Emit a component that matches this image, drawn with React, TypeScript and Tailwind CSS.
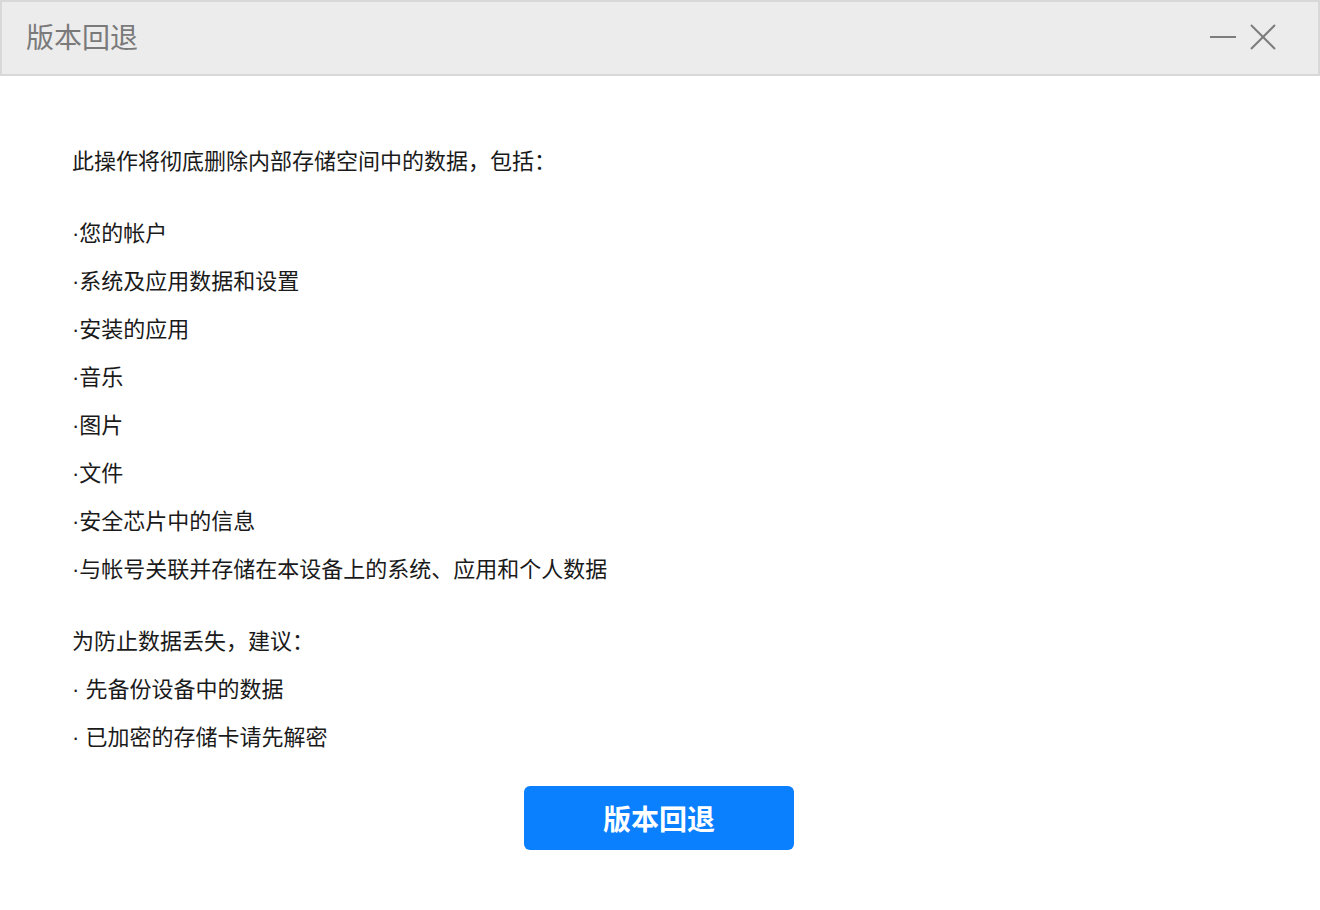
export default function App() {
  const font = { fontFamily: '"Noto Sans CJK SC", "Noto Sans", sans-serif' };
  const items = [
    "您的帐户",
    "系统及应用数据和设置",
    "安装的应用",
    "音乐",
    "图片",
    "文件",
    "安全芯片中的信息",
    "与帐号关联并存储在本设备上的系统、应用和个人数据",
  ];
  const Dot = ({ space }: { space?: boolean }) => (
    <span className="font-['Liberation_Sans',sans-serif]">{space ? "· " : "·"}</span>
  );
  return (
    <div className="w-[1320px] h-[910px] bg-white flex flex-col" style={font}>
      <div className="h-[76px] bg-[#ececec] border-2 border-[#d8d8d8] flex items-center justify-between pl-[24px] pr-[42px] pb-[4px]">
        <div className="text-[28px] text-[#7a7a7a] leading-none">版本回退</div>
        <div className="flex items-center gap-[14px] pt-[2px]">
          <svg width="26" height="26" viewBox="0 0 26 26">
            <line x1="0" y1="13" x2="26" y2="13" stroke="#7d7d7d" strokeWidth="2" />
          </svg>
          <svg width="26" height="26" viewBox="0 0 26 26">
            <line x1="1" y1="1" x2="25" y2="25" stroke="#7d7d7d" strokeWidth="2" />
            <line x1="25" y1="1" x2="1" y2="25" stroke="#7d7d7d" strokeWidth="2" />
          </svg>
        </div>
      </div>
      <div className="pl-[72px] pt-[71px] text-[22px] text-[#1a1a1a] leading-[24px]">
        <div className="h-[24px]">此操作将彻底删除内部存储空间中的数据，包括：</div>
        <div className="mt-[48px] flex flex-col gap-[24px]">
          {items.map((t) => (
            <div key={t} className="h-[24px]">
              <Dot />
              {t}
            </div>
          ))}
        </div>
        <div className="mt-[48px] flex flex-col gap-[24px]">
          <div className="h-[24px]">为防止数据丢失，建议：</div>
          <div className="h-[24px]">
            <Dot space />
            先备份设备中的数据
          </div>
          <div className="h-[24px]">
            <Dot space />
            已加密的存储卡请先解密
          </div>
        </div>
      </div>
      <div className="flex justify-center mt-[39px]">
        <button className="w-[270px] h-[64px] bg-[#0a80ff] rounded-[6px] text-white text-[28px] font-bold leading-none ml-[-2px]">
          版本回退
        </button>
      </div>
    </div>
  );
}
